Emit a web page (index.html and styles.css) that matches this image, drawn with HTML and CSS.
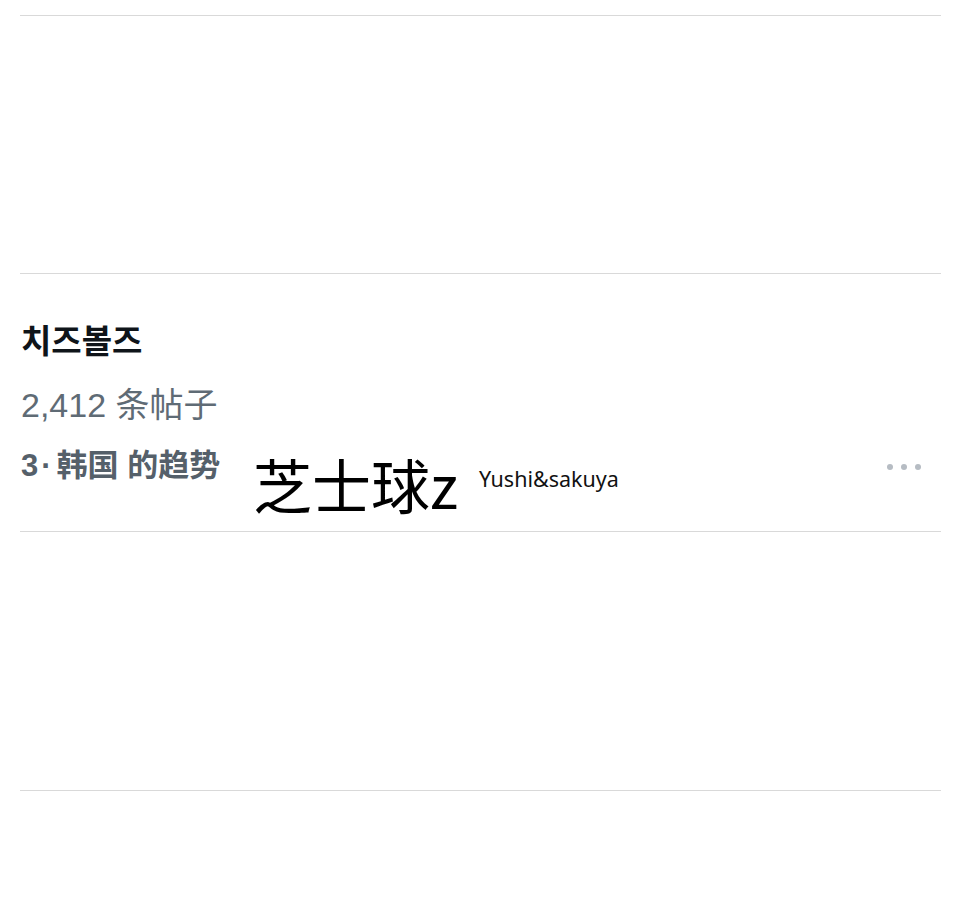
FILE: index.html
```html
<!DOCTYPE html>
<html lang="zh">
<head>
<meta charset="utf-8">
<title>趋势</title>
<link rel="stylesheet" href="styles.css">
</head>
<body>
<div class="feed">
  <div class="cell top"></div>
  <div class="cell"></div>
  <div class="cell trend">
    <div class="trend-name">치즈볼즈</div>
    <div class="trend-count">2,412 条帖子</div>
    <div class="trend-meta">
      <span class="meta-label">3<span class="sep">·</span>韩国 的趋势</span>
      <span class="more" aria-label="更多"><i></i><i></i><i></i></span>
    </div>
    <div class="caption">
      <span class="caption-main">芝士球z</span>
      <span class="caption-sub">Yushi&amp;sakuya</span>
    </div>
  </div>
  <div class="cell tall"></div>
  <div class="cell last"></div>
</div>
</body>
</html>
```

FILE: styles.css
```css
html, body {
  margin: 0;
  padding: 0;
  background: #ffffff;
}

body {
  font-family: "Liberation Sans", "Noto Sans CJK SC", "Noto Sans CJK KR", sans-serif;
  width: 960px;
  height: 912px;
  overflow: hidden;
}

.feed {
  margin: 0 19px 0 20px;
}

.cell {
  box-sizing: border-box;
  border-bottom: 1px solid #d9d9d9;
  height: 258px;
  position: relative;
}

.cell.top {
  height: 16px;
}

.cell.tall {
  height: 259px;
}

.cell.last {
  height: 100px;
  border-bottom: none;
}

.trend {
  padding-top: 49px;
}

.trend-name {
  font-family: "Noto Sans CJK KR", sans-serif;
  font-weight: 700;
  font-size: 33px;
  line-height: 33px;
  color: #0f1419;
  padding-left: 1px;
}

.trend-count {
  margin-top: 32px;
  font-size: 34px;
  line-height: 34px;
  color: #5f6b75;
  padding-left: 1px;
}

.trend-meta {
  margin-top: 28px;
  display: flex;
  align-items: center;
  justify-content: space-between;
}

.meta-label {
  font-family: "Liberation Sans", "Noto Sans CJK SC", sans-serif;
  font-weight: 700;
  font-size: 31px;
  line-height: 31px;
  color: #55606a;
  padding-left: 1px;
}

.sep {
  margin: 0 5px 0 3px;
}

.more {
  display: flex;
  gap: 8px;
  margin-right: 20px;
  margin-top: 3px;
}

.more i {
  display: block;
  width: 6px;
  height: 6px;
  border-radius: 50%;
  background: #b6bcc3;
}

.caption {
  position: absolute;
  left: 233px;
  top: 180px;
  display: flex;
  align-items: flex-start;
  gap: 21px;
}

.caption-main {
  font-family: "Noto Sans CJK SC", sans-serif;
  font-weight: 400;
  font-size: 59px;
  line-height: 59px;
  color: #000000;
}

.caption-sub {
  margin-top: 10px;
  font-family: "Noto Sans", sans-serif;
  font-size: 21.5px;
  color: #111111;
}
```
